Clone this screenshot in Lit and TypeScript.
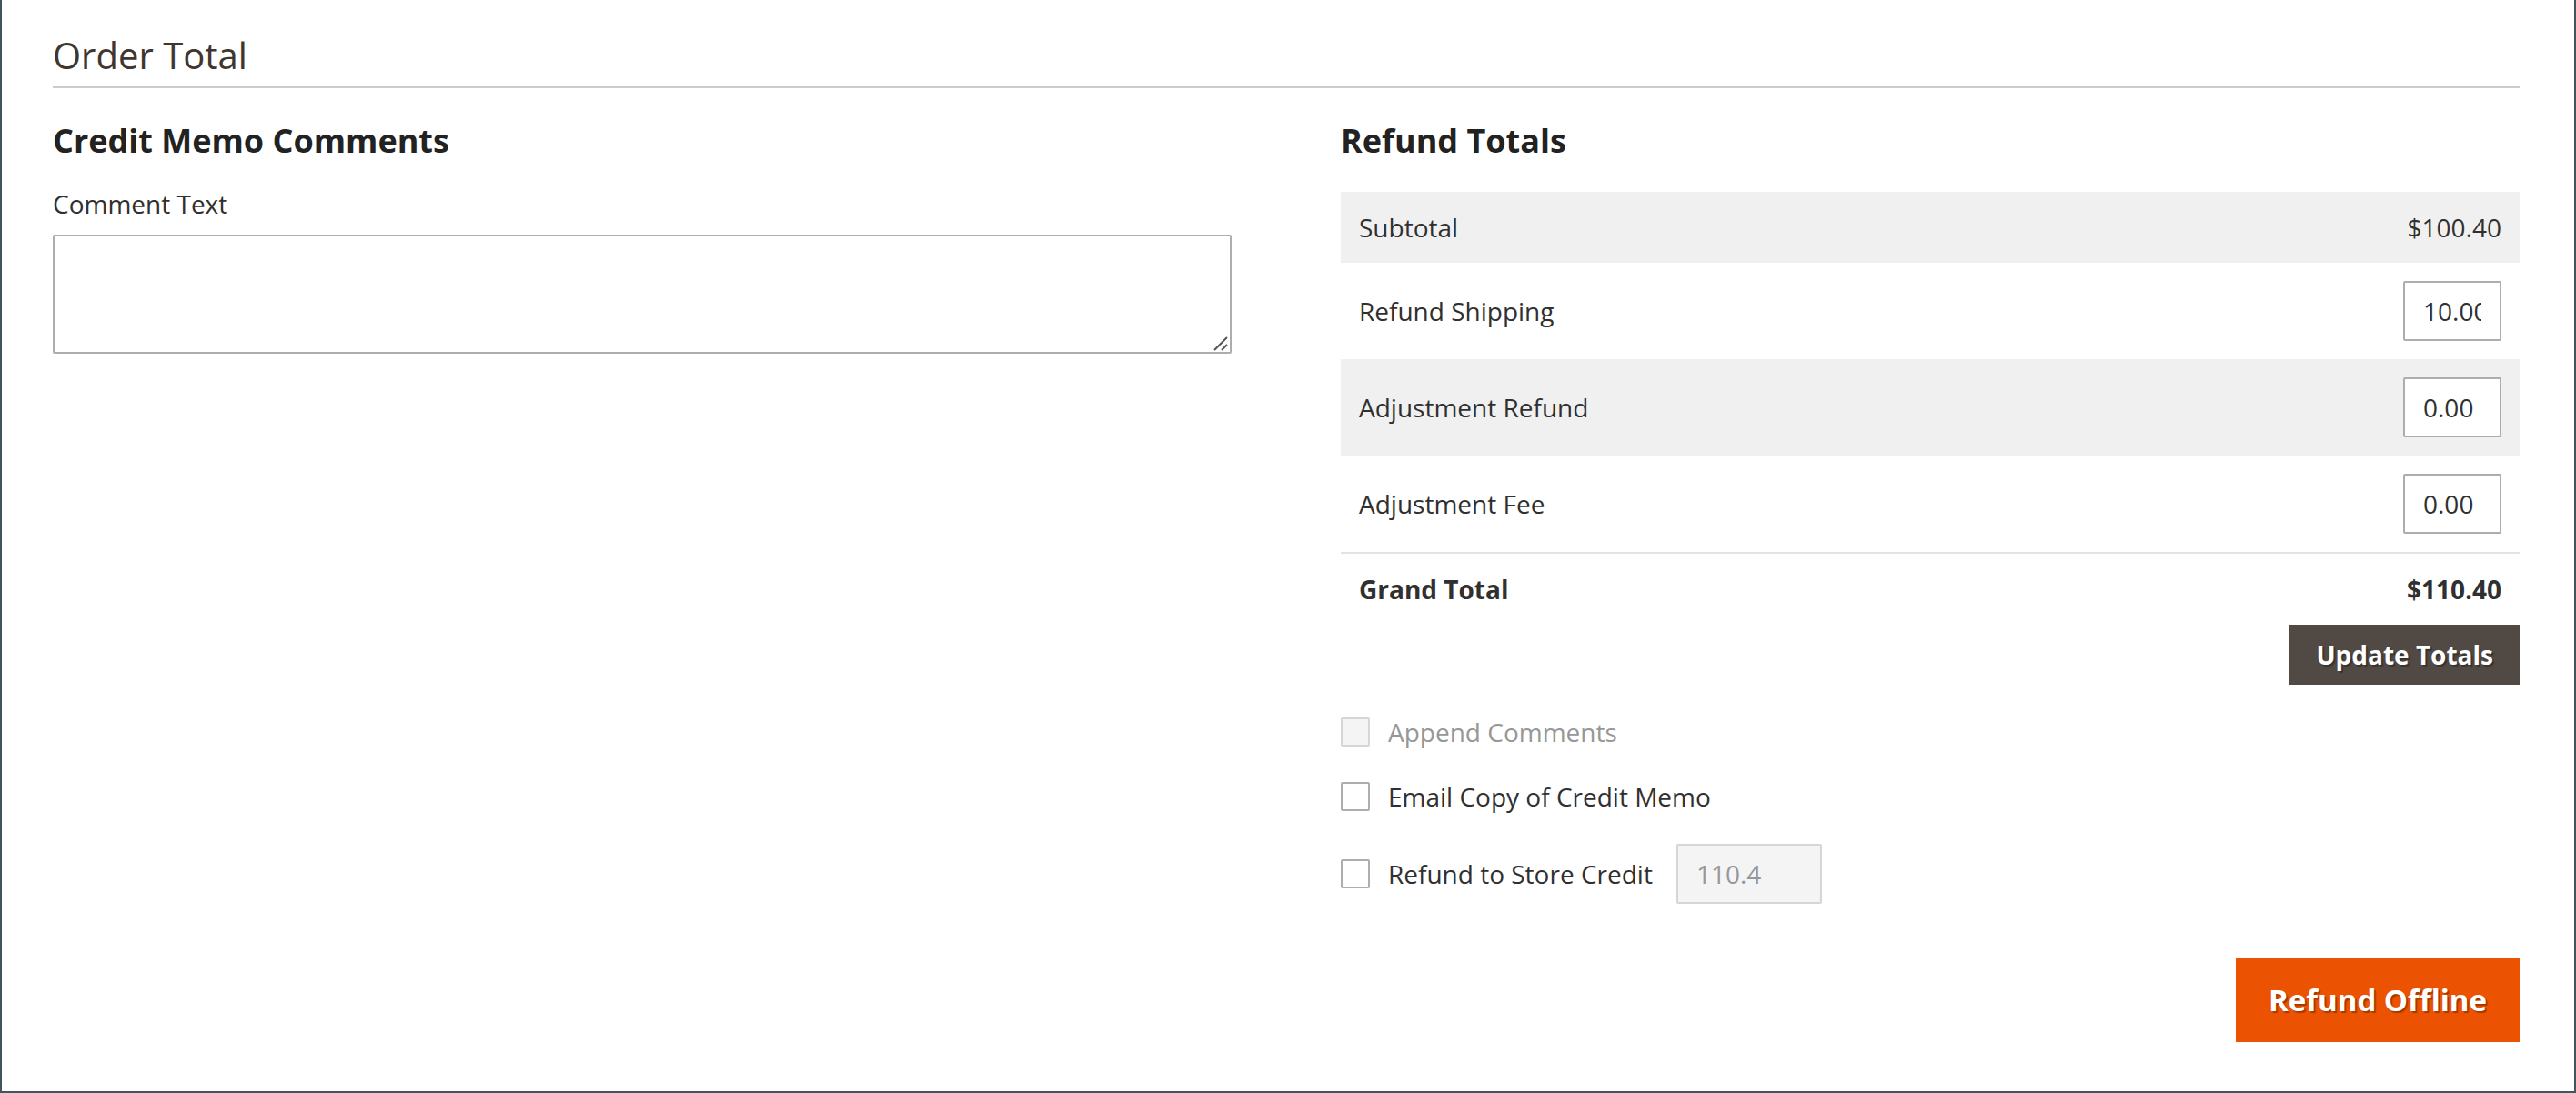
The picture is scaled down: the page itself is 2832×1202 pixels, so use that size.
import { LitElement, html, css, nothing } from "lit";
import { customElement } from "lit/decorators.js";

interface TotalRow {
  id: string;
  label: string;
  value: string;
  editable: boolean;
}

const TOTALS: TotalRow[] = [
  { id: "subtotal", label: "Subtotal", value: "$100.40", editable: false },
  { id: "shipping", label: "Refund Shipping", value: "10.00", editable: true },
  { id: "adjustment-refund", label: "Adjustment Refund", value: "0.00", editable: true },
  { id: "adjustment-fee", label: "Adjustment Fee", value: "0.00", editable: true },
];

@customElement("app-root")
export class AppRoot extends LitElement {
  static styles = css`
    :host {
      display: block;
      font-family: "Open Sans", "Noto Sans", sans-serif;
      font-size: 28px;
      line-height: 38px;
      color: #303030;
    }
    *,
    *::before {
      box-sizing: border-box;
    }
    .page {
      min-height: 100vh;
      padding: 32px 60px 54px 56px;
      border: solid #41555f;
      border-width: 0 2px 2px;
      background: #fff;
    }
    .title {
      margin: 0;
      padding-bottom: 5px;
      border-bottom: 2px solid #ccc;
      font-size: 40px;
      font-weight: 400;
      line-height: 58px;
      color: #41362f;
    }
    .columns {
      display: grid;
      grid-template-columns: 1fr 1fr;
      gap: 120px;
      padding-top: 33px;
    }
    .heading {
      margin: 0;
      font-size: 36px;
      font-weight: 700;
      line-height: 49px;
      color: #222;
    }
    .comment {
      display: flex;
      flex-direction: column;
      gap: 15px;
      padding-top: 26px;
    }
    .comment-box {
      position: relative;
      display: flex;
    }
    .field {
      margin: 0;
      padding: 0 20px;
      border: 2px solid #adadad;
      border-radius: 2px;
      background: #fff;
      font: inherit;
      color: #303030;
    }
    .field:disabled {
      border-color: #d6d6d6;
      background: #f4f4f4;
      color: #979797;
    }
    .textarea {
      width: 100%;
      min-height: 131px;
      padding: 12px 20px;
      resize: vertical;
    }
    .textarea::-webkit-resizer {
      background: transparent;
    }
    .grip {
      position: absolute;
      right: 4px;
      bottom: 3px;
      pointer-events: none;
    }
    .totals {
      width: 100%;
      margin-top: 32px;
      border-collapse: separate;
      border-spacing: 0;
    }
    .totals th,
    .totals td {
      padding: 20px;
      font-weight: 400;
      text-align: left;
    }
    .totals td {
      text-align: right;
    }
    .totals tbody tr:nth-child(odd) {
      background: #f0f0f0;
    }
    .totals tfoot th,
    .totals tfoot td {
      border-top: 2px solid #e3e3e3;
      font-weight: 700;
    }
    .amount {
      display: block;
      width: 108px;
      height: 66px;
      margin-left: auto;
    }
    .actions {
      display: flex;
      justify-content: flex-end;
    }
    .button {
      border: 0;
      border-radius: 0;
      font: inherit;
      font-weight: 700;
      color: #fff;
      text-shadow: 2px 2px 1px rgba(0, 0, 0, 0.3);
      cursor: pointer;
    }
    .update {
      height: 66px;
      padding: 0 29px;
      background: #514943;
    }
    .submit {
      height: 92px;
      padding: 0 36px;
      background: #eb5202;
      font-size: 33px;
      font-variant-ligatures: none;
    }
    .options {
      display: flex;
      flex-direction: column;
      gap: 33px;
      padding: 33px 0 60px;
    }
    .option {
      display: flex;
      align-items: center;
      gap: 26px;
    }
    .choice {
      display: flex;
      align-items: center;
      gap: 20px;
    }
    .choice-disabled {
      color: #979797;
    }
    .check {
      appearance: none;
      display: grid;
      place-items: center;
      width: 32px;
      height: 32px;
      margin: 0;
      border: 2px solid #adadad;
      border-radius: 2px;
      background: #fff;
    }
    .check:checked::before {
      content: "";
      width: 16px;
      height: 16px;
      background: #514943;
    }
    .check:disabled {
      border-color: #d6d6d6;
      background: #f4f4f4;
    }
    .credit {
      width: 160px;
      height: 66px;
    }
  `;

  private renderTotal(row: TotalRow) {
    return html`
      <tr>
        <th scope="row">
          ${row.editable ? html`<label for=${row.id}>${row.label}</label>` : row.label}
        </th>
        <td>
          ${row.editable
            ? html`<input class="field amount" id=${row.id} type="text" .value=${row.value} />`
            : row.value}
        </td>
      </tr>
    `;
  }

  private renderOption(id: string, label: string, disabled = false, extra: unknown = nothing) {
    return html`
      <div class="option">
        <label class="choice ${disabled ? "choice-disabled" : ""}" for=${id}>
          <input class="check" id=${id} type="checkbox" ?disabled=${disabled} />
          <span>${label}</span>
        </label>
        ${extra}
      </div>
    `;
  }

  render() {
    return html`
      <main class="page">
        <h1 class="title">Order Total</h1>
        <div class="columns">
          <section>
            <h2 class="heading">Credit Memo Comments</h2>
            <div class="comment">
              <label for="comment">Comment Text</label>
              <div class="comment-box">
                <textarea class="field textarea" id="comment"></textarea>
                <svg class="grip" width="16" height="16" viewBox="0 0 16 16" aria-hidden="true">
                  <path d="M1 15L15 1M9 15L15 9" fill="none" stroke="#555" stroke-width="2" />
                </svg>
              </div>
            </div>
          </section>
          <section>
            <h2 class="heading">Refund Totals</h2>
            <table class="totals">
              <tbody>
                ${TOTALS.map((row) => this.renderTotal(row))}
              </tbody>
              <tfoot>
                <tr>
                  <th scope="row">Grand Total</th>
                  <td>$110.40</td>
                </tr>
              </tfoot>
            </table>
            <div class="actions">
              <button class="button update" type="button">Update Totals</button>
            </div>
            <div class="options">
              ${this.renderOption("append", "Append Comments", true)}
              ${this.renderOption("email", "Email Copy of Credit Memo")}
              ${this.renderOption(
                "store-credit",
                "Refund to Store Credit",
                false,
                html`<input
                  class="field credit"
                  type="text"
                  aria-label="Store credit amount"
                  .value=${"110.4"}
                  disabled
                />`
              )}
            </div>
            <div class="actions">
              <button class="button submit" type="button">Refund Offline</button>
            </div>
          </section>
        </div>
      </main>
    `;
  }
}
